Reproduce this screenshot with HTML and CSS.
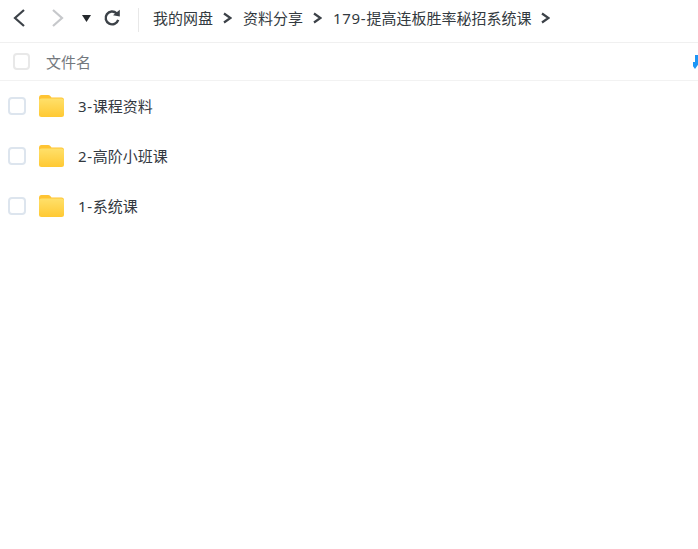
FILE: index.html
```html
<!DOCTYPE html>
<html lang="zh-CN">
<head>
  <meta charset="UTF-8" />
  <title>179-提高连板胜率秘招系统课</title>
  <link rel="stylesheet" href="styles.css">
</head>
<body>

<div class="toolbar">
  <svg class="nav-back" width="16" height="20" viewBox="0 0 16 20"><path d="M13 2 L4 10 L13 18" /></svg>
  <svg class="nav-forward" width="16" height="20" viewBox="0 0 16 20"><path d="M3 2 L12 10 L3 18" /></svg>
  <svg class="nav-down" width="9" height="7" viewBox="0 0 9 7"><path d="M0 0 H9 L4.500 7 Z" /></svg>
  <svg class="nav-refresh" width="18" height="18" viewBox="0 0 18 18">
    <path class="refresh-arc" d="M13.600 4.400 A6.400 6.400 0 1 0 15.200 10.800" />
    <path class="refresh-head" d="M10 6.200 L16.800 7.600 L16.800 0.800 Z" />
  </svg>
  <div class="divider"></div>
  <div class="crumbs">
    <span>我的网盘</span>
    <svg class="crumb-arrow" width="9" height="12" viewBox="0 0 9 12"><path d="M1 1.500 L7.500 6 L1 10.500" /></svg>
    <span>资料分享</span>
    <svg class="crumb-arrow" width="9" height="12" viewBox="0 0 9 12"><path d="M1 1.500 L7.500 6 L1 10.500" /></svg>
    <span><span class="num">179-</span>提高连板胜率秘招系统课</span>
    <svg class="crumb-arrow" width="9" height="12" viewBox="0 0 9 12"><path d="M1 1.500 L7.500 6 L1 10.500" /></svg>
  </div>
</div>

<div class="list-head">
  <span class="checkbox head-check"></span>
  <span class="head-name">文件名</span>
  <svg class="sort-icon" width="5" height="14" viewBox="0 0 5 14"><path d="M2 0 H5 V7 H7 L2 14 L-3 7 H2 Z" /></svg>
</div>

<div class="file-list">
  <div class="file-row">
    <span class="checkbox"></span>
    <svg class="folder" width="26" height="24" viewBox="0 0 26 24"><use href="#folder-icon" /></svg>
    <span class="file-name"><span class="num">3-</span>课程资料</span>
  </div>
  <div class="file-row">
    <span class="checkbox"></span>
    <svg class="folder" width="26" height="24" viewBox="0 0 26 24"><use href="#folder-icon" /></svg>
    <span class="file-name"><span class="num">2-</span>高阶小班课</span>
  </div>
  <div class="file-row">
    <span class="checkbox"></span>
    <svg class="folder" width="26" height="24" viewBox="0 0 26 24"><use href="#folder-icon" /></svg>
    <span class="file-name"><span class="num">1-</span>系统课</span>
  </div>
</div>

<svg class="defs" width="0" height="0">
  <defs>
    <linearGradient id="folder-front" x1="0" y1="0" x2="0" y2="1">
      <stop offset="0" stop-color="#ffe06a" />
      <stop offset="1" stop-color="#ffc933" />
    </linearGradient>
    <g id="folder-icon">
      <path fill="#ffc433" d="M0 4 Q0 1 2.500 1 H9 Q10.500 1 11.500 2.200 L12.500 3.500 H22.500 Q25 3.500 25 6 V10 H0 Z" />
      <rect x="0" y="4.500" width="25" height="18.500" rx="2.500" fill="url(#folder-front)" />
    </g>
  </defs>
</svg>

</body>
</html>
```

FILE: styles.css
```css
html, body {
  height: 100%;
}
body {
  margin: 0;
  background: #fff;
  font-family: "Noto Sans", "Noto Sans CJK SC", sans-serif;
  color: #333;
  overflow: hidden;
}
.toolbar {
  display: flex;
  align-items: center;
  height: 36px;
  padding: 0 0 6px 11px;
  border-bottom: 1px solid #f0f0f0;
}
.toolbar svg {
  flex: none;
}
.nav-back path,
.nav-forward path {
  fill: none;
  stroke-width: 2.2;
}
.nav-back path {
  stroke: #3c4248;
}
.nav-forward {
  margin-left: 23px;
}
.nav-forward path {
  stroke: #c6c8cb;
}
.nav-down {
  margin-left: 16px;
}
.nav-down path {
  fill: #24282c;
}
.nav-refresh {
  margin-left: 12px;
}
.refresh-arc {
  fill: none;
  stroke: #3c4248;
  stroke-width: 2.4;
}
.refresh-head {
  fill: #3c4248;
}
.divider {
  width: 1px;
  height: 24px;
  margin: 3px 0 0 17px;
  background: #e8e8e8;
}
.crumbs {
  display: flex;
  align-items: center;
  margin-left: 14px;
  font-size: 15px;
  line-height: 20px;
  color: #333a40;
}
.num {
  letter-spacing: 0.7px;
}
.crumb-arrow {
  margin: 0 11px 0 10px;
}
.crumb-arrow path {
  fill: none;
  stroke: #3c4248;
  stroke-width: 2.2;
}
.list-head {
  display: flex;
  align-items: center;
  height: 37px;
  padding-left: 13px;
  border-bottom: 1px solid #f2f2f2;
}
.checkbox {
  flex: none;
  box-sizing: border-box;
  width: 18px;
  height: 18px;
  border: 2px solid #dde5ee;
  border-radius: 4px;
  background: #fff;
}
.head-check {
  width: 17px;
  height: 17px;
  border-color: #e8e8e8;
}
.head-name {
  margin-left: 16px;
  font-size: 15px;
  color: #73787d;
}
.sort-icon {
  margin-left: auto;
  overflow: hidden;
}
.sort-icon path {
  fill: #1e96f5;
}
.file-row {
  display: flex;
  align-items: center;
  height: 50px;
  padding-left: 8px;
}
.folder {
  margin-left: 13px;
}
.file-name {
  margin-left: 13px;
  padding-bottom: 2px;
  font-size: 15px;
  color: #33393f;
}
.defs {
  position: absolute;
}
```
